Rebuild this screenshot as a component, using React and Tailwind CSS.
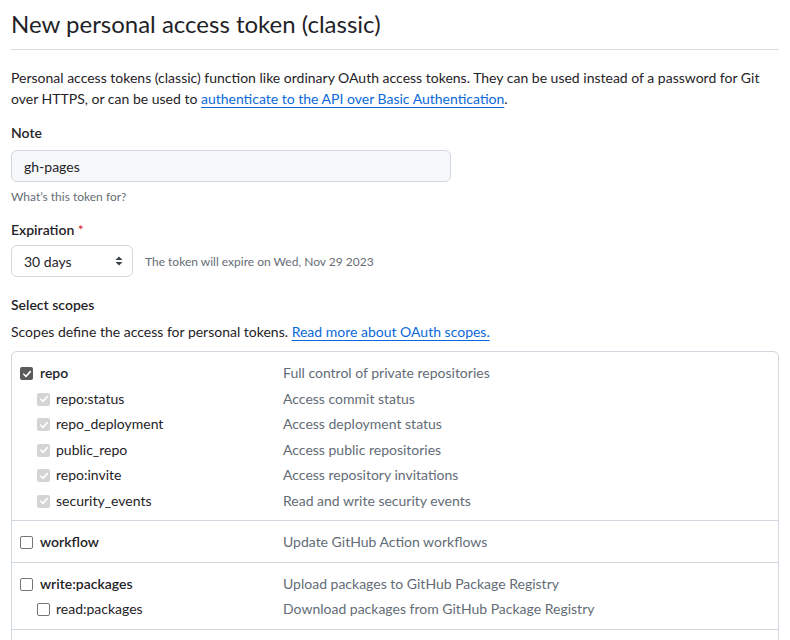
import React from "react";

function Check({ state, className = "" }) {
  if (state === "empty") {
    return (
      <span
        className={
          "inline-block w-[13px] h-[13px] shrink-0 rounded-[2px] border border-[#767676] bg-white " +
          className
        }
      />
    );
  }
  const bg = state === "checked" ? "bg-[#5b5b5b]" : "bg-[#d4d4d4]";
  return (
    <span
      className={
        "inline-flex items-center justify-center w-[13px] h-[13px] shrink-0 rounded-[2px] " +
        bg +
        " " +
        className
      }
    >
      <svg width="10" height="10" viewBox="0 0 10 10">
        <path
          d="M1.8 5.2 L4 7.4 L8.3 2.6"
          fill="none"
          stroke="white"
          strokeWidth="1.6"
          strokeLinecap="round"
          strokeLinejoin="round"
        />
      </svg>
    </span>
  );
}

function Row({ label, desc, state, sub, bold }) {
  return (
    <div className="flex items-center h-[25.5px]">
      <div
        className={
          "flex items-center w-[271px] shrink-0 " + (sub ? "pl-[25px]" : "pl-[8px]")
        }
      >
        <Check state={state} className="mt-[2px]" />
        <span
          className={
            (bold ? "font-semibold ml-[7px]" : "ml-[6px]") + " text-[#1f2328]"
          }
        >
          {label}
        </span>
      </div>
      <div className="text-[#636c76]">{desc}</div>
    </div>
  );
}

export default function App() {
  return (
    <div
      className="bg-white min-h-[640px] px-[11px] text-[14px] leading-[21px] text-[#1f2328]"
      style={{ fontFamily: "Lato, 'Noto Sans', sans-serif" }}
    >
      <div className="pt-[6px] pb-[7px] border-b border-[#d8dee4]">
        <h1 className="text-[24px] leading-[36px] font-normal">
          New personal access token (classic)
        </h1>
      </div>

      <p className="mt-[17px]">
        Personal access tokens (classic) function like ordinary OAuth access tokens. They can be
        used instead of a password for Git over HTTPS, or can be used to{" "}
        <a className="text-[#0969da] underline underline-offset-[3px]" href="#">
          authenticate to the API over Basic Authentication
        </a>
        .
      </p>

      <div className="mt-[13px]">
        <div className="font-semibold">Note</div>
        <div className="mt-[7px] w-[440px] h-[32px] rounded-[6px] border border-[#d0d7de] bg-[#f6f8fa] flex items-center pl-[12px]">
          gh-pages
        </div>
        <div className="mt-[6px] text-[12px] leading-[18px] text-[#656d76]">
          What’s this token for?
        </div>
      </div>

      <div className="mt-[13px]">
        <div className="font-semibold">
          Expiration <span className="text-[#d1242f] font-normal">*</span>
        </div>
        <div className="mt-[5px] flex items-center">
          <div className="w-[122px] h-[32px] rounded-[6px] border border-[#d0d7de] bg-white flex items-center justify-between pl-[12px] pr-[8px]">
            <span>30 days</span>
            <svg width="10" height="12" viewBox="0 0 10 12">
              <path d="M5 1.5 L8.5 5 L1.5 5 Z" fill="#3a3f45" />
              <path d="M5 10.5 L8.5 7 L1.5 7 Z" fill="#3a3f45" />
            </svg>
          </div>
          <span className="ml-[12px] text-[12px] text-[#656d76]">
            The token will expire on Wed, Nov 29 2023
          </span>
        </div>
      </div>

      <div className="mt-[17px]">
        <div className="font-semibold">Select scopes</div>
        <div className="mt-[6px]">
          Scopes define the access for personal tokens.{" "}
          <a className="text-[#0969da] underline underline-offset-[3px]" href="#">
            Read more about OAuth scopes.
          </a>
        </div>
      </div>

      <div className="mt-[9px] border border-[#d0d7de] rounded-[6px]">
        <div className="pt-[8px] pb-[7px] border-b border-[#d0d7de]">
          <Row label="repo" desc="Full control of private repositories" state="checked" bold />
          <Row label="repo:status" desc="Access commit status" state="disabled" sub />
          <Row label="repo_deployment" desc="Access deployment status" state="disabled" sub />
          <Row label="public_repo" desc="Access public repositories" state="disabled" sub />
          <Row label="repo:invite" desc="Access repository invitations" state="disabled" sub />
          <Row label="security_events" desc="Read and write security events" state="disabled" sub />
        </div>
        <div className="pt-[8px] pb-[7px] border-b border-[#d0d7de]">
          <Row label="workflow" desc="Update GitHub Action workflows" state="empty" bold />
        </div>
        <div className="pt-[8px] pb-[7px] border-b border-[#d0d7de]">
          <Row label="write:packages" desc="Upload packages to GitHub Package Registry" state="empty" bold />
          <Row label="read:packages" desc="Download packages from GitHub Package Registry" state="empty" sub />
        </div>
        <div className="h-[20px]" />
      </div>
    </div>
  );
}
